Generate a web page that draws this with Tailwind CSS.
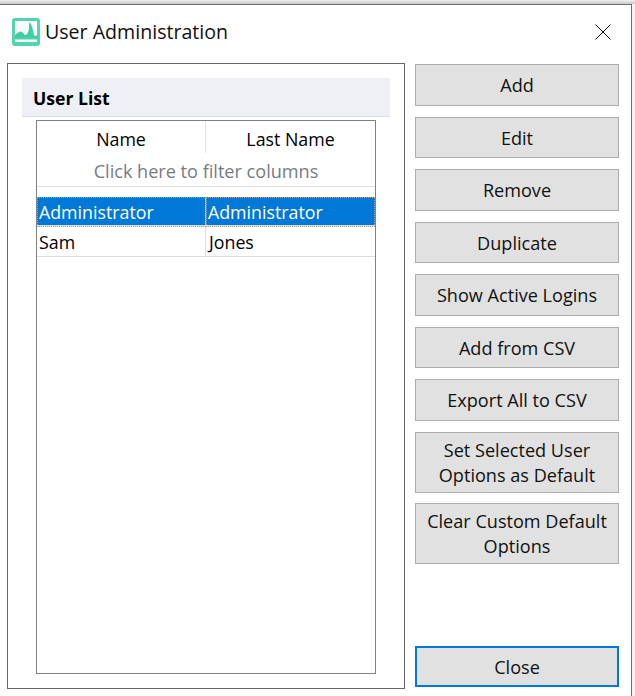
<!DOCTYPE html>
<html><head><meta charset="utf-8"><script src="https://cdn.jsdelivr.net/npm/@tailwindcss/browser@4"></script></head>
<body class="m-0 w-[635px] h-[696px] overflow-hidden bg-[#f4f4f4] font-['Open_Sans',sans-serif] text-black">
<div class="h-[4px] bg-gradient-to-b from-[#f0f0f0] to-[#c8c8c8]"></div>
<div class="w-[632px] h-[692px] bg-white border-t border-r border-[#6f6f6f] flex flex-col">
  <header class="h-[58px] flex items-center pl-[12px] pr-[20px] shrink-0">
    <svg class="w-[28px] h-[28px] mb-[4px]" viewBox="0 0 28 28"><rect width="28" height="28" rx="3" fill="#52d5ae"/><rect x="3" y="3" width="22" height="17" fill="#f6fffc"/><path d="M3 20v-3q3-3 5-3.500t3.500 2 3.500 .5 2-8 2-2 2.500 9 3.500 2h0.500v3z" fill="#3fce9f"/><rect x="3" y="21.500" width="22" height="2.500" fill="#f0fdf8"/></svg>
    <span class="ml-[5px] mb-[4px] text-[19.6px] leading-none text-[#111]">User Administration</span>
    <svg class="ml-auto w-[16px] h-[16px] mb-[4px]" viewBox="0 0 16 16"><path d="M.5.5l15 15M15.5.5l-15 15" stroke="#111" stroke-width="1" fill="none"/></svg>
  </header>
  <div class="flex-1 flex pl-[7px] pr-[12px] pb-[7px] min-h-0">
    <section class="w-[398px] border border-[#666] pt-[14px] px-[14px] pb-[14px] flex flex-col">
      <h2 class="h-[39px] w-[368px] shrink-0 bg-[#eff0f5] border-b border-[#dedfe3] flex items-center pl-[11px] pt-[2px] text-[17.6px] font-bold">User List</h2>
      <div class="mt-[3px] mx-[14px] w-[340px] flex-1 border border-[#808088] flex flex-col text-[17.8px]">
        <div class="grid grid-cols-[169px_1fr] h-[35px] text-center items-center shrink-0">
          <div class="h-[32px] self-start flex items-center justify-center border-r border-[#e4e4e4] pt-[5px]">Name</div>
          <div class="pt-[2px]">Last Name</div>
        </div>
        <div class="h-[31px] shrink-0 flex items-center justify-center text-[18.1px] text-[#767c87] border-b border-[#dedede] pt-[1px]">Click here to filter columns</div>
        <div class="h-[10px] shrink-0"></div>
        <div class="grid grid-cols-[169px_1fr] h-[30px] shrink-0 bg-[#0078d7] text-white border-b-[2px] border-[#dedede] leading-[30px]">
          <div class="pl-[2px] border-r border-[#dce9f5] outline-1 outline-dotted outline-[#b99f88] -outline-offset-1">Administrator</div>
          <div class="pl-[2px] outline-1 outline-dotted outline-[#b99f88] -outline-offset-1">Administrator</div>
        </div>
        <div class="grid grid-cols-[169px_1fr] h-[30px] shrink-0 border-b border-[#dedede] leading-[30px]">
          <div class="pl-[2px] border-r border-[#dedede]">Sam</div>
          <div class="pl-[3px]">Jones</div>
        </div>
      </div>
    </section>
    <nav class="ml-[10px] w-[204px] flex flex-col text-[18.1px] leading-[25px] text-[#111] pt-[1px] pb-[2px]">
      <button class="h-[42px] mb-[11px] bg-[#e1e1e1] border border-[#adadad]">Add</button>
      <button class="h-[41px] mb-[11px] pt-[1px] bg-[#e1e1e1] border border-[#adadad]">Edit</button>
      <button class="h-[42px] mb-[11px] bg-[#e1e1e1] border border-[#adadad]">Remove</button>
      <button class="h-[41px] mb-[11px] pt-[1px] bg-[#e1e1e1] border border-[#adadad]">Duplicate</button>
      <button class="h-[42px] mb-[11px] bg-[#e1e1e1] border border-[#adadad]">Show Active Logins</button>
      <button class="h-[41px] mb-[11px] pt-[1px] bg-[#e1e1e1] border border-[#adadad]">Add from CSV</button>
      <button class="h-[42px] mb-[11px] bg-[#e1e1e1] border border-[#adadad]">Export All to CSV</button>
      <button class="h-[61px] mb-[10px] bg-[#e1e1e1] border border-[#adadad]">Set Selected User<br>Options as Default</button>
      <button class="h-[61px] bg-[#e1e1e1] border border-[#adadad]">Clear Custom Default<br>Options</button>
      <button class="h-[41px] mt-auto pt-[1px] bg-[#e1e1e1] border-2 border-[#0078d7]">Close</button>
    </nav>
  </div>
</div>
</body></html>
